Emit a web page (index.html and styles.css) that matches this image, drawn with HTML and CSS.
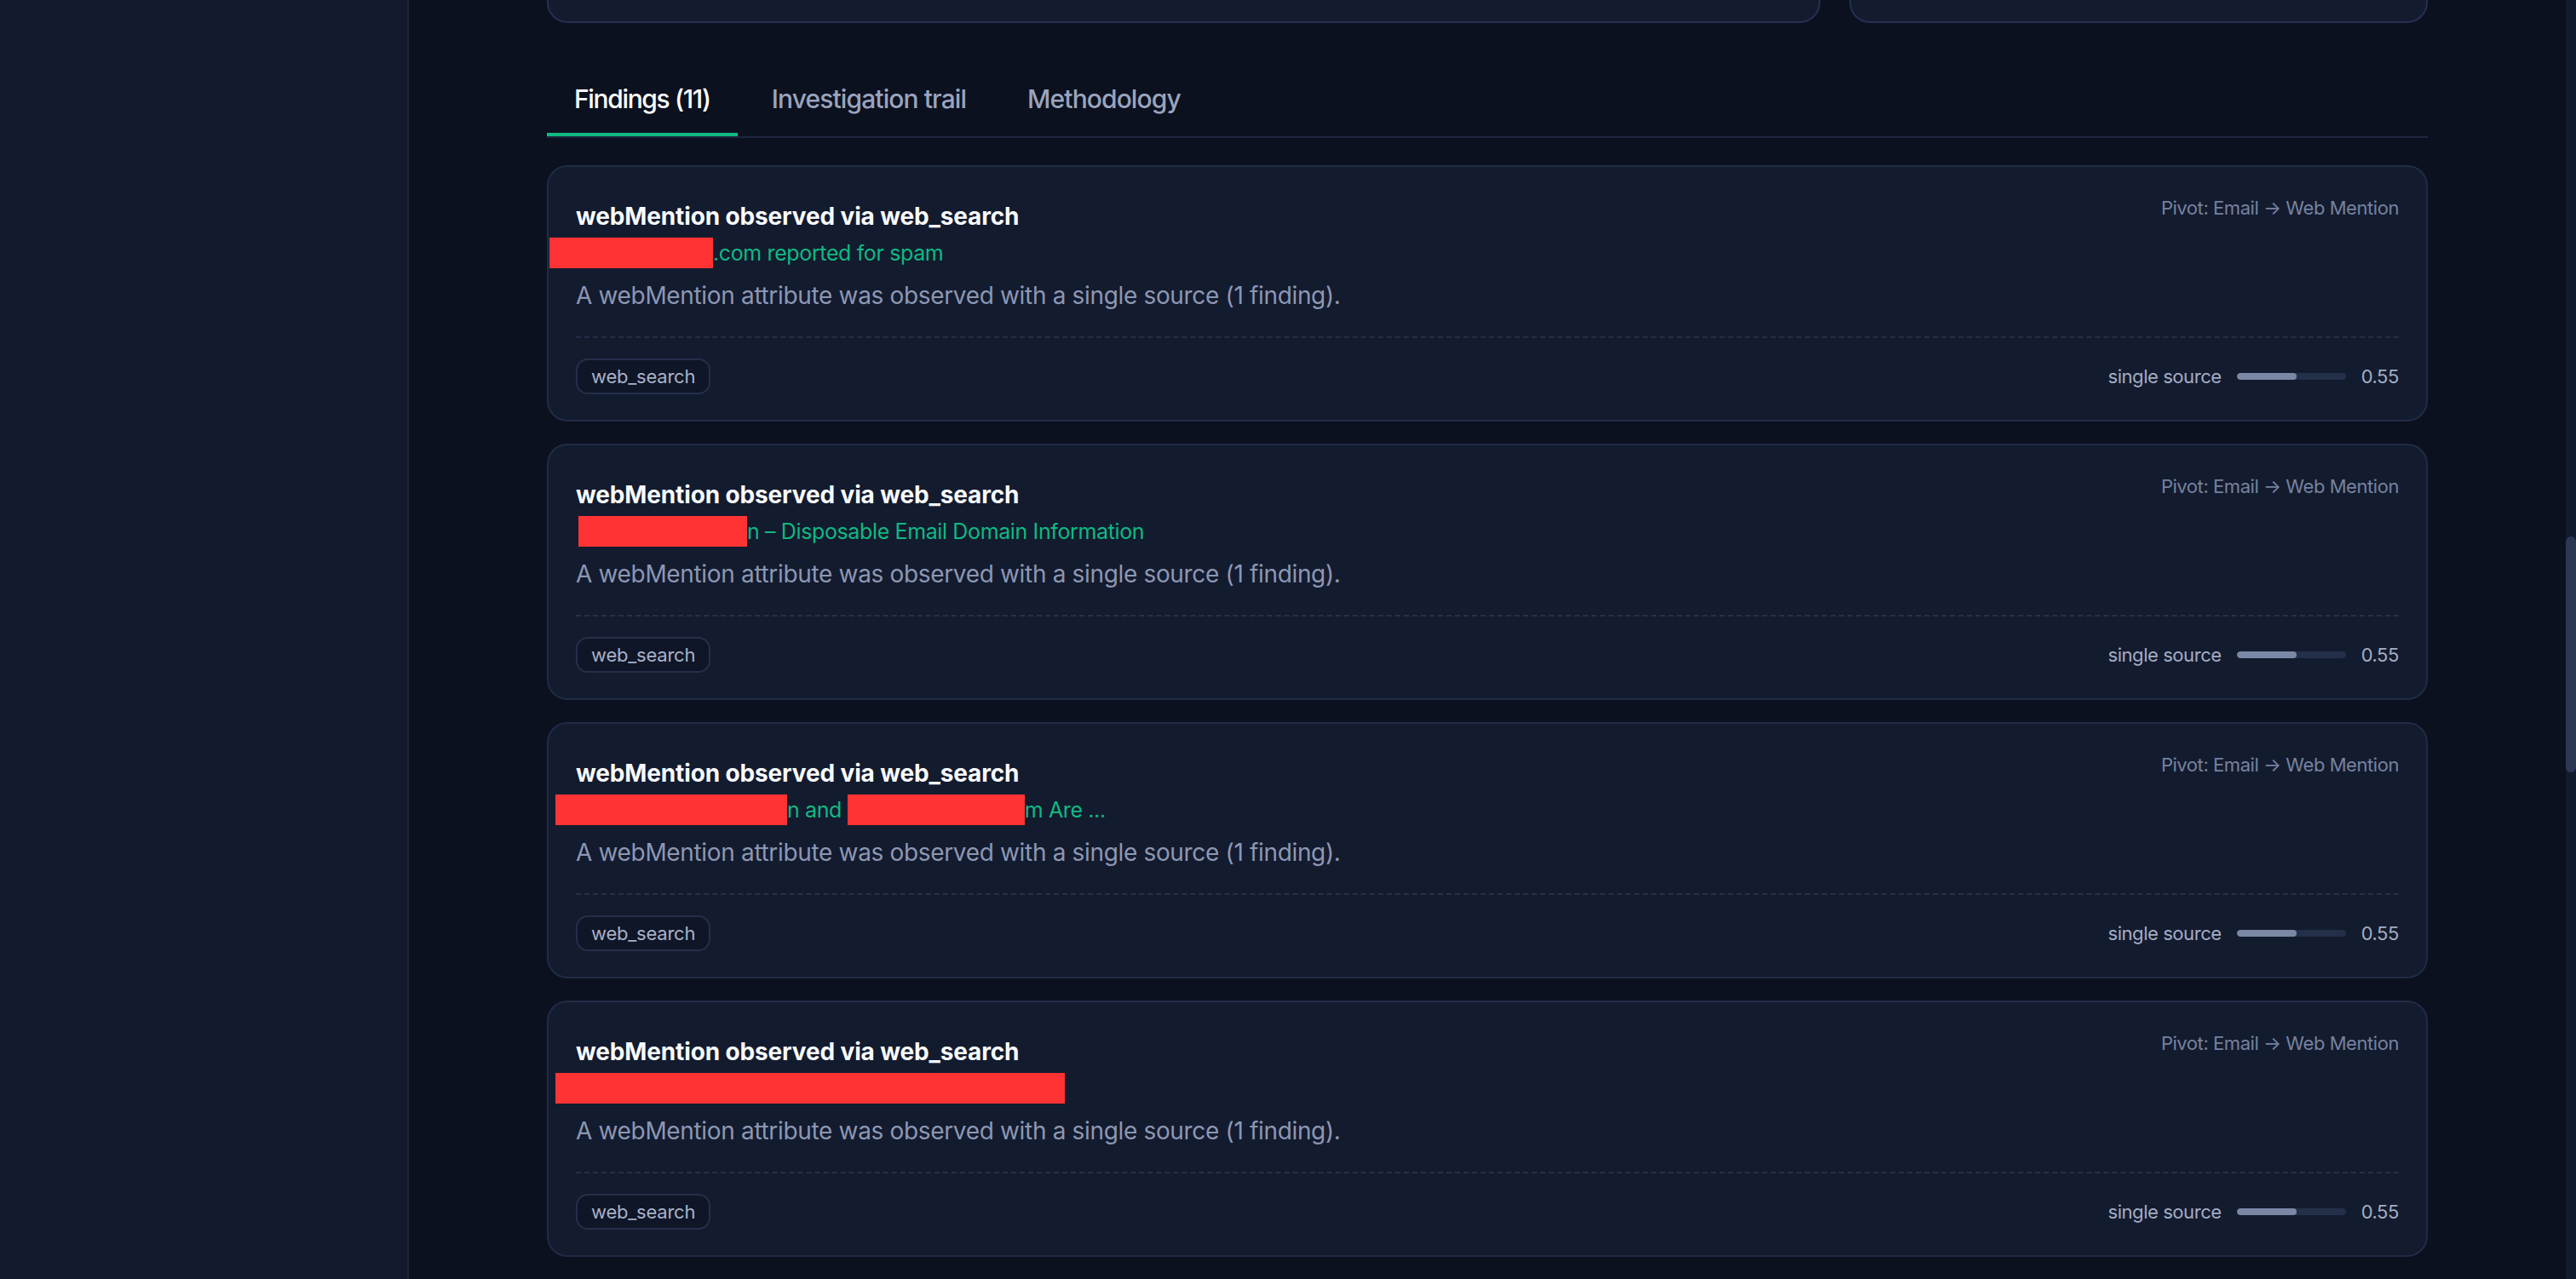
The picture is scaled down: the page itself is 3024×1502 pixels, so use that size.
FILE: index.html
```html
<!DOCTYPE html>
<html lang="en">
<head>
  <meta charset="UTF-8">
  <meta name="viewport" content="width=device-width, initial-scale=1.0">
  <title>Investigation findings</title>
  <link rel="stylesheet" href="styles.css">
</head>
<body>
  <div class="app">
    <aside class="sidebar"></aside>

    <main class="main">
      <div class="content">
        <div class="summary-row">
          <div class="summary-card"></div>
          <div class="summary-card"></div>
        </div>

        <nav class="tabs">
          <a class="tab active" href="#findings">Findings (11)</a>
          <a class="tab" href="#trail">Investigation trail</a>
          <a class="tab" href="#method">Methodology</a>
        </nav>

        <div class="findings">
          <div class="finding">
            <div class="finding-head">
              <div class="finding-main">
                <h3 class="finding-title">webMention observed via web_search</h3>
                <div class="finding-source"><span class="redact" style="width: 192px; margin-left: -31px"></span>.com reported for spam</div>
                <p class="finding-desc">A webMention attribute was observed with a single source (1 finding).</p>
              </div>
              <div class="finding-pivot">Pivot: Email → Web Mention</div>
            </div>
            <div class="finding-foot">
              <span class="chip">web_search</span>
              <div class="confidence">
                <span class="confidence-label">single source</span>
                <div class="confidence-bar"><div class="confidence-fill" style="width: 55%"></div></div>
                <span class="confidence-value">0.55</span>
              </div>
            </div>
          </div>

          <div class="finding">
            <div class="finding-head">
              <div class="finding-main">
                <h3 class="finding-title">webMention observed via web_search</h3>
                <div class="finding-source"><span class="redact" style="width: 198px; margin-left: 3px"></span>n – Disposable Email Domain Information</div>
                <p class="finding-desc">A webMention attribute was observed with a single source (1 finding).</p>
              </div>
              <div class="finding-pivot">Pivot: Email → Web Mention</div>
            </div>
            <div class="finding-foot">
              <span class="chip">web_search</span>
              <div class="confidence">
                <span class="confidence-label">single source</span>
                <div class="confidence-bar"><div class="confidence-fill" style="width: 55%"></div></div>
                <span class="confidence-value">0.55</span>
              </div>
            </div>
          </div>

          <div class="finding">
            <div class="finding-head">
              <div class="finding-main">
                <h3 class="finding-title">webMention observed via web_search</h3>
                <div class="finding-source"><span class="redact" style="width: 272px; margin-left: -24px"></span>n and <span class="redact" style="width: 208px"></span>m Are ...</div>
                <p class="finding-desc">A webMention attribute was observed with a single source (1 finding).</p>
              </div>
              <div class="finding-pivot">Pivot: Email → Web Mention</div>
            </div>
            <div class="finding-foot">
              <span class="chip">web_search</span>
              <div class="confidence">
                <span class="confidence-label">single source</span>
                <div class="confidence-bar"><div class="confidence-fill" style="width: 55%"></div></div>
                <span class="confidence-value">0.55</span>
              </div>
            </div>
          </div>

          <div class="finding">
            <div class="finding-head">
              <div class="finding-main">
                <h3 class="finding-title">webMention observed via web_search</h3>
                <div class="finding-source"><span class="redact" style="width: 598px; margin-left: -24px"></span></div>
                <p class="finding-desc">A webMention attribute was observed with a single source (1 finding).</p>
              </div>
              <div class="finding-pivot">Pivot: Email → Web Mention</div>
            </div>
            <div class="finding-foot">
              <span class="chip">web_search</span>
              <div class="confidence">
                <span class="confidence-label">single source</span>
                <div class="confidence-bar"><div class="confidence-fill" style="width: 55%"></div></div>
                <span class="confidence-value">0.55</span>
              </div>
            </div>
          </div>
        </div>
      </div>
    </main>

    <div class="scrollbar"><div class="scrollbar-thumb"></div></div>
  </div>
</body>
</html>
```

FILE: styles.css
```css
body {
  margin: 0;
  font-family: Inter, "Noto Sans", sans-serif;
  background-color: #0b111f;
  color: #e2e8f0;
}
.app {
  display: flex;
  height: 100vh;
  overflow: hidden;
}
.sidebar {
  flex: 0 0 480px;
  box-sizing: border-box;
  background-color: #131a2d;
  border-right: 2px solid #1f2740;
}
.main {
  flex: 1;
  overflow: hidden;
}
.content {
  width: 2208px;
  margin: 0 auto;
}

/* cards above the tabs, scrolled mostly out of view */
.summary-row {
  display: grid;
  grid-template-columns: 1fr 679px;
  gap: 34px;
}
.summary-card {
  height: 25px;
  background-color: #131b2f;
  border: 2px solid #263052;
  border-top: none;
  border-radius: 0 0 24px 24px;
}

.tabs {
  display: flex;
  gap: 8px;
  margin-top: 47px;
  border-bottom: 2px solid #1e2740;
}
.tab {
  padding: 22px 32px 20px;
  font-size: 30px;
  line-height: 40px;
  font-weight: 500;
  letter-spacing: -0.03em;
  color: #9aa4bd;
  text-decoration: none;
  border-bottom: 4px solid transparent;
}
.tab.active {
  color: #ffffff;
  letter-spacing: -0.045em;
  border-bottom-color: #10b981;
}

.findings {
  display: flex;
  flex-direction: column;
  gap: 26px;
  margin-top: 32px;
}
.finding {
  background-color: #131b2f;
  border: 2px solid #222b46;
  border-radius: 24px;
  padding: 32px 32px 30px;
}
.finding-head {
  display: flex;
  justify-content: space-between;
  align-items: flex-start;
}
.finding-title {
  margin: 6px 0 0;
  font-size: 28px;
  line-height: 40px;
  font-weight: 700;
  letter-spacing: -0.005em;
  color: #f8fafc;
}
.finding-source {
  margin-top: 5px;
  height: 36px;
  font-size: 25px;
  line-height: 36px;
  letter-spacing: -0.015em;
  color: #10b981;
  white-space: nowrap;
}
.redact {
  display: inline-block;
  height: 36px;
  vertical-align: top;
  background-color: #ff3333;
}
.finding-desc {
  margin: 12px 0 0;
  font-size: 28px;
  line-height: 40px;
  letter-spacing: -0.012em;
  color: #8d97b2;
}
.finding-pivot {
  font-size: 22px;
  line-height: 32px;
  letter-spacing: -0.02em;
  color: #76829e;
  white-space: nowrap;
}

.finding-foot {
  display: flex;
  justify-content: space-between;
  align-items: center;
  margin-top: 28px;
  padding-top: 24px;
  border-top: 2px dashed #262f49;
}
.chip {
  box-sizing: border-box;
  height: 42px;
  padding: 4px 16px;
  font-size: 22px;
  line-height: 30px;
  letter-spacing: -0.01em;
  color: #a8b1c7;
  background-color: #0f1627;
  border: 2px solid #252f4a;
  border-radius: 14px;
}
.confidence {
  display: flex;
  align-items: center;
  gap: 18px;
  font-size: 22px;
  letter-spacing: -0.02em;
}
.confidence-label {
  color: #a4adc3;
}
.confidence-bar {
  width: 128px;
  height: 8px;
  border-radius: 4px;
  background-color: #243049;
  overflow: hidden;
}
.confidence-fill {
  height: 100%;
  border-radius: 4px;
  background-color: #7a87a5;
}
.confidence-value {
  color: #a4adc3;
}

.scrollbar {
  flex: 0 0 12px;
  background-color: #121a2d;
}
.scrollbar-thumb {
  margin-top: 630px;
  height: 277px;
  border-radius: 6px;
  background-color: #2d3855;
}
```
